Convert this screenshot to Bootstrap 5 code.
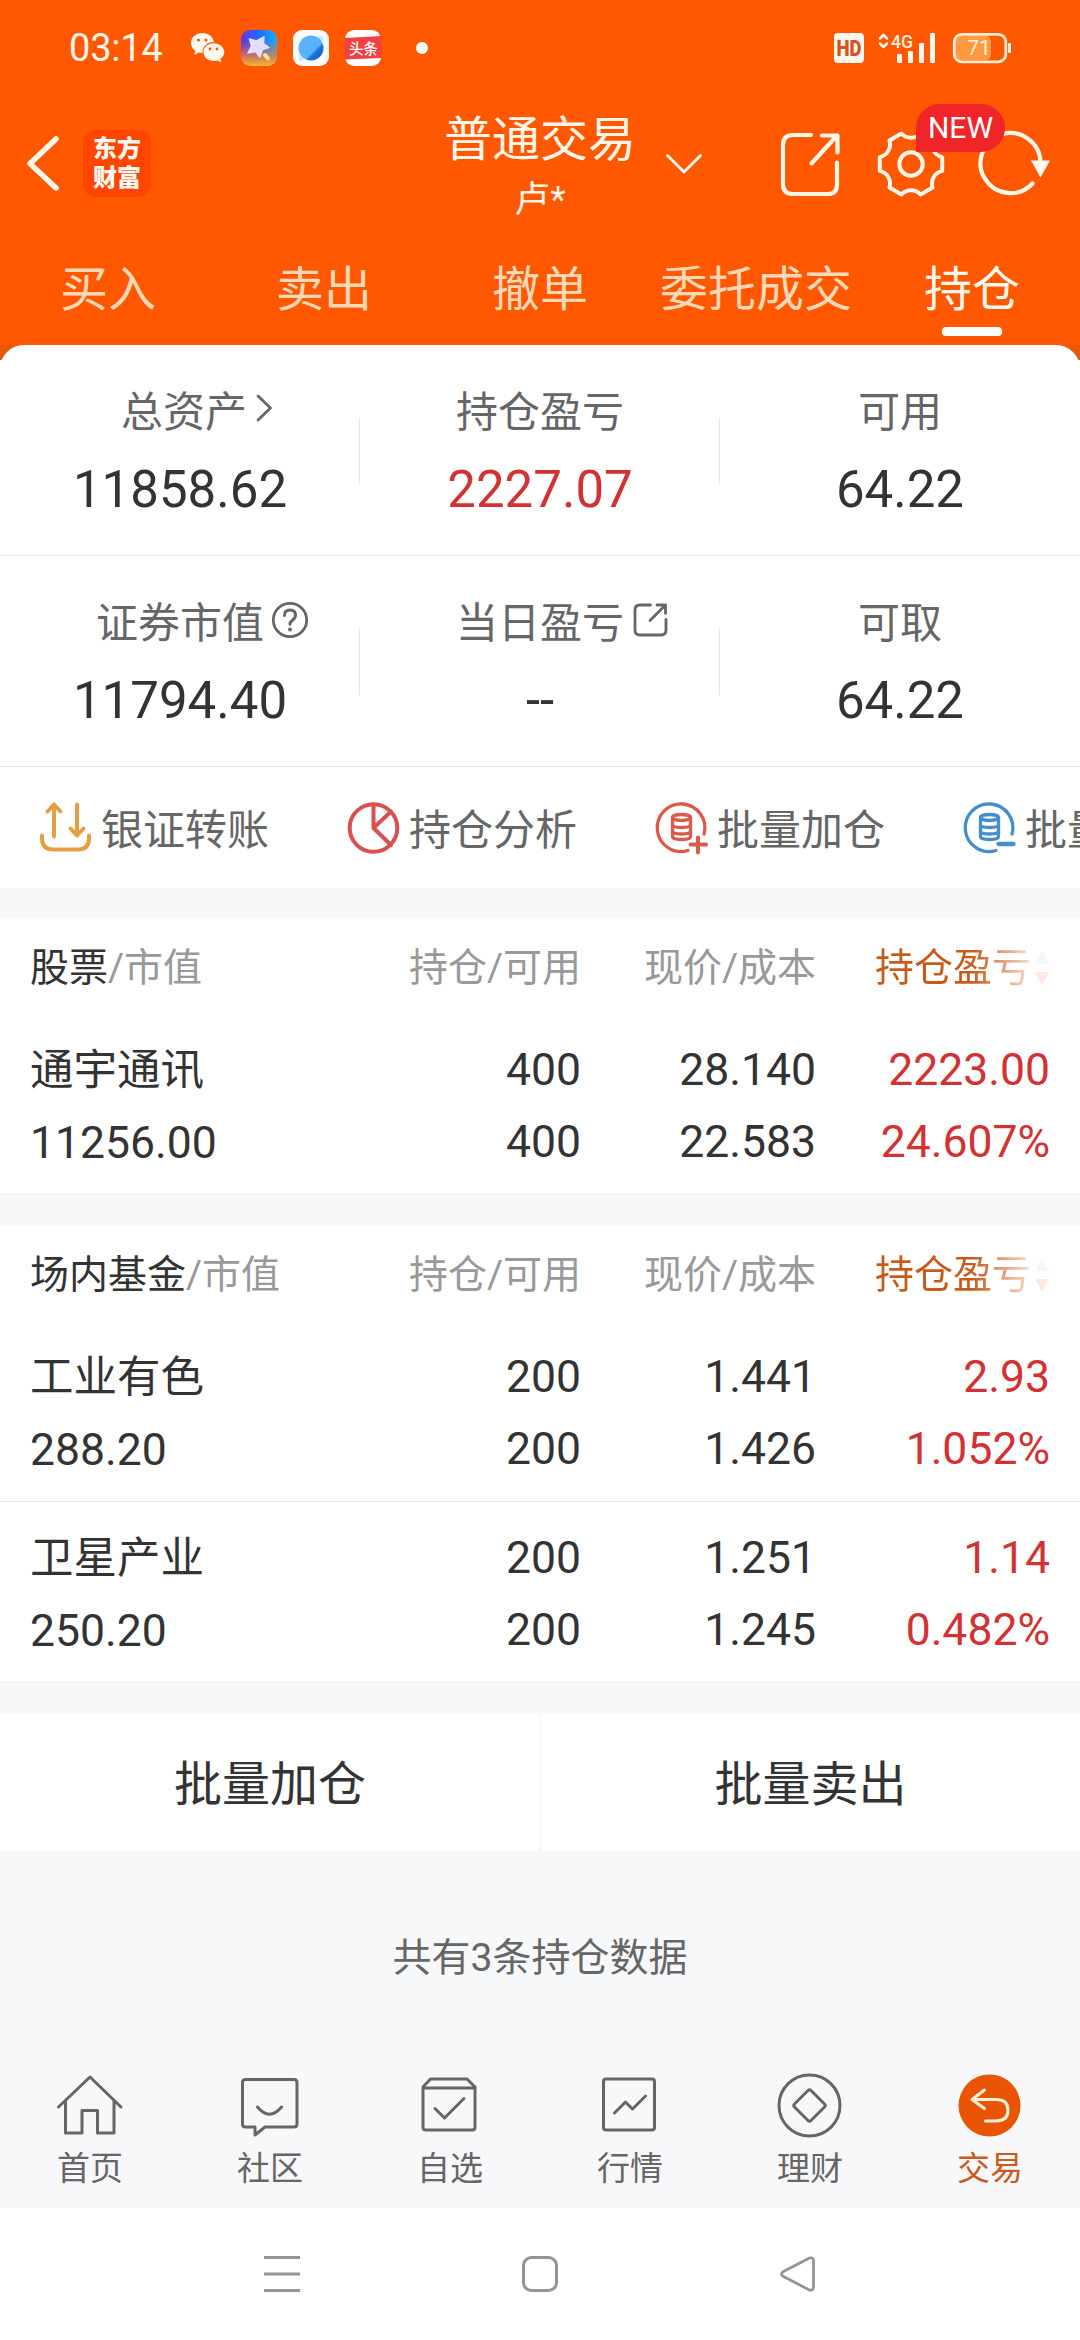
<!DOCTYPE html>
<html lang="zh-CN">
<head>
<meta charset="utf-8">
<meta name="viewport" content="width=device-width, initial-scale=1">
<title>持仓</title>
<link href="https://cdn.jsdelivr.net/npm/bootstrap@5.3.0/dist/css/bootstrap.min.css" rel="stylesheet">
<style>
  body { font-family: Roboto, "Noto Sans CJK SC", sans-serif; color: #333; background: #f7f8fa; width: 1080px; height: 2340px; overflow: hidden; line-height: 1; }
  svg { display: block; flex: none; overflow: visible; }
  .ln { fill: none; stroke: currentColor; stroke-linecap: round; stroke-linejoin: round; }
  .hero { background: #ff5800; height: 345px; color: #fff5e8; }
  .statusbar { height: 96px; padding-left: 69px; }
  .clock { font-size: 38px; width: 122px; letter-spacing: -.2px; }
  .topbar { height: 135px; display: grid; grid-template-columns: 444px 192px 444px; align-items: center; }
  .brand { width: 68px; height: 67px; border-radius: 13px; background: #ff4500; font: 900 24px/29px "Noto Sans CJK SC", sans-serif; margin-left: 23px; padding-bottom: 5px; color: #fff8f0; }
  .acct { font-size: 48px; line-height: 60px; padding-top: 12px; white-space: nowrap; }
  .who { font-size: 36px; line-height: 60px; }
  .newtag { position: absolute; left: 40px; top: -28px; width: 89px; height: 48px; border-radius: 24px 24px 24px 0; background: #f02528; color: #fff; font-size: 30px; line-height: 48px; z-index: 2; }
  .tabs { height: 114px; }
  .tabs div { font-size: 48px; line-height: 60px; color: #ffd8b8; padding-top: 29px; width: 216px; white-space: nowrap; }
  .tabs .on { color: #fff8ec; }
  .tabs .on::after { content: ""; display: block; width: 60px; height: 9px; border-radius: 4px; background: #fff; margin: 7px auto 0; }
  .corner { background: linear-gradient(#e85a08 0 15px, #fff 15px); }
  .sheet { background: #fff; border-radius: 24px 24px 0 0; }
  .fund { height: 211px; border-bottom: 1px solid #e9e9e9; }
  .fund > div { width: 360px; position: relative; }
  .fund > div + div::before { content: ""; position: absolute; left: -1px; top: 73px; width: 1px; height: 66px; background: #e6e6e6; }
  .cap { font-size: 42px; line-height: 50px; color: #666; margin-top: 43px; }
  .cap .tail { position: absolute; left: 100%; top: -2px; }
  .amt { font-size: 51px; line-height: 60px; margin-top: 22px; }
  .up { color: #d33232; }
  .quick { height: 121px; padding-left: 37px; overflow: hidden; }
  .quick > div { width: 308px; flex: none; font-size: 42px; color: #666; gap: 8px; white-space: nowrap; }
  .quick span { padding-top: 6px; }
  .blk { background: #fff; margin-top: 30px; }
  .g { display: grid; grid-template-columns: 270px 281px 235px 234px; padding: 0 30px; text-align: right; }
  .g > :first-child { text-align: left; }
  .hd { height: 96px; line-height: 100px; font-size: 39px; color: #999; }
  .hd b { font-weight: 400; color: #333; }
  .sort { display: flex; justify-content: flex-end; align-items: center; gap: 3px; }
  .sort span { background: linear-gradient(90deg, #c85a18 0 62%, #f7ddd0 100%); -webkit-background-clip: text; background-clip: text; color: transparent; }
  .ro { height: 181px; padding-top: 20px; font-size: 44.5px; line-height: 72px; border-bottom: 1px solid #ebebed; }
  .ro .nm { font-size: 43.5px; }
  .acts { background: #fff; height: 138px; margin-top: 30px; font-size: 48px; }
  .acts > div { padding-top: 5px; }
  .acts > div + div { border-left: 1px solid #f2f2f2; }
  .total { font-size: 39px; color: #666; height: 212px; padding-top: 3px; }
  .tabbar { background: #f8f8fb; height: 145px; font-size: 33px; color: #666; padding-top: 10px; }
  .tabbar > div { width: 180px; }
  .tabbar .lbl { line-height: 40px; margin-top: 10px; }
  .sysnav { background: #fff; height: 132px; color: #949494; padding: 0 264px; }
</style>
</head>
<body>
<header class="hero">
  <div class="statusbar d-flex align-items-center">
    <div class="clock">03:14</div>
    <svg width="34" height="30" viewBox="0 0 34 30"><path fill="#fff8ee" d="M11.5 0C5 0 0 4.4 0 10c0 3.200 1.700 6 4.200 7.800L3.400 22l4.600-2.400c1.200.3 2.400.5 3.600.4C11 13.500 16.500 8.900 23 9 22 3.800 17.300 0 11.500 0z"/><path fill="#fff8ee" d="M22.700 10.200c-5.700 0-10.300 3.900-10.300 8.900S17 28 22.700 28c1.300 0 2.500-.2 3.600-.6l4 2-.8-3.700c2.300-1.600 3.800-4 3.800-6.600 0-5-4.900-8.900-10.600-8.900z"/><g fill="#ff5800"><circle cx="7.500" cy="7" r="1.600"/><circle cx="15" cy="7" r="1.600"/><circle cx="19" cy="16" r="1.400"/><circle cx="26" cy="16" r="1.400"/></g></svg>
    <svg class="ms-3" width="36" height="36" viewBox="0 0 36 36"><defs><linearGradient id="sa" x1="0" y1="0" x2="1" y2="0"><stop stop-color="#6a35d8"/><stop offset=".5" stop-color="#1e6cff"/><stop offset="1" stop-color="#18b0f8"/></linearGradient><linearGradient id="sb" x1="0" y1="0" x2="0" y2="1"><stop offset=".3" stop-color="#f06040" stop-opacity="0"/><stop offset=".8" stop-color="#f08838" stop-opacity=".9"/><stop offset="1" stop-color="#f0b830"/></linearGradient></defs><rect width="36" height="36" rx="9" fill="url(#sa)"/><rect width="36" height="36" rx="9" fill="url(#sb)"/><path d="M23 7L22.500 13.500 28 17.500 21.500 19.500 19 27 14.500 21.500 7 23 10.500 16 8.500 9 15.500 11z" fill="#e4defc" stroke="#e4defc" stroke-width="1.500" stroke-linejoin="round"/><path d="M24 25l3 3.500" stroke="#ffe2a0" stroke-width="4" stroke-linecap="round"/></svg>
    <svg class="ms-3" width="36" height="36" viewBox="0 0 36 36"><defs><linearGradient id="pl" x1="0" y1="0" x2="1" y2="1"><stop stop-color="#5cb0fc"/><stop offset=".6" stop-color="#58b4fc"/><stop offset=".68" stop-color="#1a74e4"/><stop offset="1" stop-color="#0a50c8"/></linearGradient></defs><rect width="36" height="36" rx="9" fill="#fbfbfa"/><ellipse cx="18" cy="18" rx="17" ry="5" transform="rotate(-45 18 18)" fill="#c4e6ff"/><circle cx="18" cy="18" r="12.500" fill="url(#pl)"/></svg>
    <svg class="ms-3" width="36" height="36" viewBox="0 0 36 36"><rect width="36" height="36" rx="9" fill="#fff"/><path d="M-.5 8l37-2v22l-37 1.500z" fill="#f04142"/><text x="18.500" y="24" text-anchor="middle" font-family="Noto Sans CJK SC" font-weight="500" font-size="14.500" fill="#fff">头条</text></svg>
    <svg width="12" height="12" style="margin-left:35px"><circle cx="6" cy="6" r="6" fill="#fff"/></svg>
    <svg class="ms-auto" width="178" height="30" viewBox="834 33 178 30" style="margin-right:68px">
      <rect x="834" y="33" width="30" height="30" rx="4" fill="#fff8ee"/><text x="849" y="56" text-anchor="middle" font-family="Roboto" font-weight="900" font-size="22" textLength="25" lengthAdjust="spacingAndGlyphs" fill="#d9541a">HD</text>
      <path class="ln" stroke-width="2.500" d="M880 38.500l3.500-3.500 3.500 3.500M880 43.500l3.500 3.500 3.500-3.500"/>
      <text x="891" y="47.500" font-family="Roboto" font-weight="500" font-size="19" textLength="22" lengthAdjust="spacingAndGlyphs" fill="#fff0dc">4G</text>
      <g fill="#fff8ee"><rect x="897" y="54" width="5" height="9" rx="1"/><rect x="908" y="51" width="5" height="12" rx="1"/><rect x="919" y="43" width="5" height="20" rx="1"/><rect x="930" y="33" width="5" height="30" rx="1"/></g>
      <rect x="956" y="36" width="35" height="24" rx="5" fill="#ff9a40"/><rect x="954.300" y="34.300" width="51.500" height="27.500" rx="7.500" fill="none" stroke="#ffeed8" stroke-width="2.800"/><rect x="1008" y="43" width="3" height="10" rx="1" fill="#ffeed8"/>
      <text x="979" y="55" text-anchor="middle" font-family="Roboto" font-size="21" fill="#fff0dc">71</text>
    </svg>
  </div>
  <div class="topbar">
    <div class="d-flex align-items-center" style="padding-left:26px">
      <svg width="34" height="57" viewBox="26 135 34 57"><path class="ln" stroke-width="5.500" d="M56 139L30 163.500 56 188"/></svg>
      <div class="brand d-flex flex-column justify-content-center text-center"><span>东方</span><span>财富</span></div>
    </div>
    <div class="text-center"><div class="acct">普通交易</div><div class="who">卢*</div></div>
    <div class="d-flex align-items-center">
      <svg style="margin-left:29px" width="38" height="64" viewBox="665 131 38 64"><path class="ln" stroke-width="3" d="M667.500 154.500L684 171l16.500-16.500"/></svg>
      <svg style="margin-left:76px" width="62" height="64" viewBox="779 131.500 62 64"><path class="ln" stroke-width="4.200" d="M811 134.500H793q-10 0-10 10v39q0 10 10 10h35q9 0 9-9.500v-22M811.500 163L837 135M822 135h15.500v17"/></svg>
      <div class="position-relative" style="margin-left:35px">
        <svg width="70" height="64" viewBox="-35 -32 70 64"><path class="ln" stroke-width="4" d="M-9.600-30.500A13 13 0 0 0 9.600-30.500L21.600-23.600A13 13 0 0 0 31.200-6.900V6.900A13 13 0 0 0 21.600 23.600L9.600 30.500A13 13 0 0 0-9.600 30.500L-21.600 23.600A13 13 0 0 0-31.200 6.900V-6.900A13 13 0 0 0-21.600-23.600z"/><circle class="ln" r="11.700" stroke-width="4"/></svg>
        <div class="newtag text-center">NEW</div>
      </div>
      <svg style="margin-left:32px" width="74" height="64" viewBox="978 131.500 74 64"><path class="ln" stroke-width="4.200" d="M1040.500 162A30 30 0 1 0 1032.500 183"/><path fill="#fff8ee" d="M1031 160h19l-9.500 17z"/></svg>
    </div>
  </div>
  <nav class="tabs d-flex text-center"><div>买入</div><div>卖出</div><div>撤单</div><div>委托成交</div><div class="on">持仓</div></nav>
</header>
<main>
  <div class="corner"><div class="sheet">
    <section class="fund d-flex text-center">
      <div><div class="cap"><span class="position-relative d-inline-block" style="left:4px">总资产<svg class="tail" style="margin-left:8px" width="20" height="46" viewBox="256 387 20 46"><path class="ln" stroke-width="2.800" d="M259 397l12.500 12L259 421"/></svg></span></div><div class="amt">11858.62</div></div>
      <div><div class="cap">持仓盈亏</div><div class="amt up">2227.07</div></div>
      <div><div class="cap">可用</div><div class="amt">64.22</div></div>
    </section>
    <section class="fund d-flex text-center">
      <div><div class="cap"><span class="position-relative d-inline-block">证券市值<svg class="tail" style="margin-left:6px" width="40" height="46" viewBox="270 597 40 46"><circle class="ln" cx="290" cy="620" r="16.700" stroke-width="2.800"/><path class="ln" stroke-width="3" d="M284.500 615.500q0-5.500 5.500-5.500t5.500 5q0 3-3 5.200t-2.500 4"/><circle cx="290" cy="629.500" r="2" fill="currentColor"/></svg></span></div><div class="amt">11794.40</div></div>
      <div><div class="cap"><span class="position-relative d-inline-block">当日盈亏<svg class="tail" style="margin-left:7px" width="40" height="46" viewBox="631 597 40 46"><path class="ln" stroke-width="2.800" d="M650.500 605H640q-5 0-5 5v20q0 5 5 5h21q5 0 5-5v-10.500M650 620.500L665 605.500M657 605h8.500v8.500"/></svg></span></div><div class="amt">--</div></div>
      <div><div class="cap">可取</div><div class="amt">64.22</div></div>
    </section>
    <section class="quick d-flex align-items-center">
      <div class="d-flex align-items-center"><svg width="56" height="56" viewBox="37 799.500 56 56"><path class="ln" style="stroke:#e3a043" stroke-width="4" d="M42 835v3q0 11 11 11h25q11 0 11-11v-3M54 836v-32M47.500 811l6.500-7 6.500 7M77 804v31M70.500 828l6.500 7 6.500-7"/></svg><span>银证转账</span></div>
      <div class="d-flex align-items-center"><svg width="56" height="56" viewBox="345 799.500 56 56"><g class="ln" style="stroke:#dc4f50" stroke-width="4"><circle cx="373.500" cy="827.500" r="23.800"/><path d="M373.500 804v23.500L391 844.500M373.500 827.500L391 811"/></g></svg><span>持仓分析</span></div>
      <div class="d-flex align-items-center"><svg width="56" height="56" viewBox="653 799.500 56 56"><g class="ln" style="stroke:#db5b4a" stroke-width="3.300"><path d="M704 833.500A23.800 23.800 0 1 0 688 850"/><ellipse cx="681.500" cy="817" rx="9" ry="3"/><path d="M672.500 817v19q0 3 9 3t9-3v-19M672.500 824q0 3 9 3t9-3M672.500 830.500q0 3 9 3t9-3"/><path stroke-width="4" d="M690.500 844h15.500M698 837v15"/></g></svg><span>批量加仓</span></div>
      <div class="d-flex align-items-center"><svg width="56" height="56" viewBox="961 799.500 56 56"><g class="ln" style="stroke:#448ecd" stroke-width="3.300"><path d="M1012 833.500A23.800 23.800 0 1 0 996 850"/><ellipse cx="989.500" cy="817" rx="9" ry="3"/><path d="M980.500 817v19q0 3 9 3t9-3v-19M980.500 824q0 3 9 3t9-3M980.500 830.500q0 3 9 3t9-3"/><path stroke-width="4.300" d="M998.500 843.500h15"/></g></svg><span>批量卖出</span></div>
    </section>
  </div></div>
  <section class="blk">
    <div class="g hd"><div><b>股票</b>/市值</div><div>持仓/可用</div><div>现价/成本</div><div class="sort"><span>持仓盈亏</span><svg width="16" height="36" viewBox="0 0 16 36"><path d="M8 1l7 13H1z" fill="#f6f6f6"/><path d="M1 22h14L8 35z" fill="#fde9df"/></svg></div></div>
    <div class="g ro"><div><span class="nm">通宇通讯</span><br>11256.00</div><div>400<br>400</div><div>28.140<br>22.583</div><div class="up">2223.00<br>24.607%</div></div>
  </section>
  <section class="blk">
    <div class="g hd"><div><b>场内基金</b>/市值</div><div>持仓/可用</div><div>现价/成本</div><div class="sort"><span>持仓盈亏</span><svg width="16" height="36" viewBox="0 0 16 36"><path d="M8 1l7 13H1z" fill="#f6f6f6"/><path d="M1 22h14L8 35z" fill="#fde9df"/></svg></div></div>
    <div class="g ro"><div><span class="nm">工业有色</span><br>288.20</div><div>200<br>200</div><div>1.441<br>1.426</div><div class="up">2.93<br>1.052%</div></div>
    <div class="g ro"><div><span class="nm">卫星产业</span><br>250.20</div><div>200<br>200</div><div>1.251<br>1.245</div><div class="up">1.14<br>0.482%</div></div>
  </section>
  <section class="acts d-flex text-center"><div class="w-50 d-flex align-items-center justify-content-center">批量加仓</div><div class="w-50 d-flex align-items-center justify-content-center">批量卖出</div></section>
  <div class="total d-flex align-items-center justify-content-center">共有3条持仓数据</div>
</main>
<nav class="tabbar d-flex text-center">
  <div><svg class="mx-auto" width="68" height="66" viewBox="56 2073 68 66"><path class="ln" stroke-width="3" d="M58.500 2107L90 2077l31 30M65.500 2101v32H82v-22.500h15.500V2133H114v-32"/></svg><div class="lbl">首页</div></div>
  <div><svg class="mx-auto" width="68" height="66" viewBox="236 2073 68 66"><path class="ln" stroke-width="3" d="M245.500 2079.500H294q3 0 3 3V2124q0 3-3 3H265l-10 8v-8h-9.500q-3 0-3-3v-41.500q0-3 3-3zM257.500 2107q12 14.500 24 0"/></svg><div class="lbl">社区</div></div>
  <div><svg class="mx-auto" width="68" height="66" viewBox="416 2073 68 66"><path class="ln" stroke-width="3" d="M423 2087l7.500-8H467l8 8v40q0 3-3 3h-46q-3 0-3-3zM423 2088h52M435 2108.500l9.500 9.500 19.500-19.500"/></svg><div class="lbl">自选</div></div>
  <div><svg class="mx-auto" width="68" height="66" viewBox="596 2073 68 66"><g class="ln" stroke-width="3"><rect x="603.500" y="2079" width="51" height="51" rx="2.500"/><path d="M614.500 2113l11-11 7 7 13-13"/></g></svg><div class="lbl">行情</div></div>
  <div><svg class="mx-auto" width="68" height="66" viewBox="776 2073 68 66"><g class="ln" stroke-width="3"><circle cx="809.500" cy="2105.500" r="30.500"/><path d="M808 2090.500q1.500-1.500 3 0l13.500 13.500q1.500 1.500 0 3L811 2120.500q-1.500 1.500-3 0L794.500 2107q-1.500-1.500 0-3z"/></g></svg><div class="lbl">理财</div></div>
  <div><svg class="mx-auto" width="68" height="66" viewBox="956 2073 68 66"><circle cx="989.500" cy="2105.500" r="31" fill="#e95504"/><path class="ln" style="stroke:#fff0dc" stroke-width="3" d="M984.500 2090L972 2099.500l12.500 9M972 2099.500h24q12 0 12 10.700t-12 10.700h-10.500"/></svg><div class="lbl" style="color:#cb5a1c">交易</div></div>
</nav>
<div class="sysnav d-flex align-items-center justify-content-between">
  <svg width="36" height="36"><path stroke="currentColor" stroke-width="3" d="M0 1.500h36M0 18h36M0 34.500h36"/></svg>
  <svg width="36" height="36"><rect x="1.500" y="1.500" width="33" height="33" rx="8" class="ln" stroke-width="3"/></svg>
  <svg width="36" height="36"><path class="ln" stroke-width="2.800" d="M3.500 15.500L29 2.200q4.500-1.500 4.500 2.800v26q0 4.300-4.500 2.800L3.500 20.500q-4-2.500 0-5z"/></svg>
</div>
<script src="https://cdn.jsdelivr.net/npm/bootstrap@5.3.0/dist/js/bootstrap.bundle.min.js"></script>
</body>
</html>
